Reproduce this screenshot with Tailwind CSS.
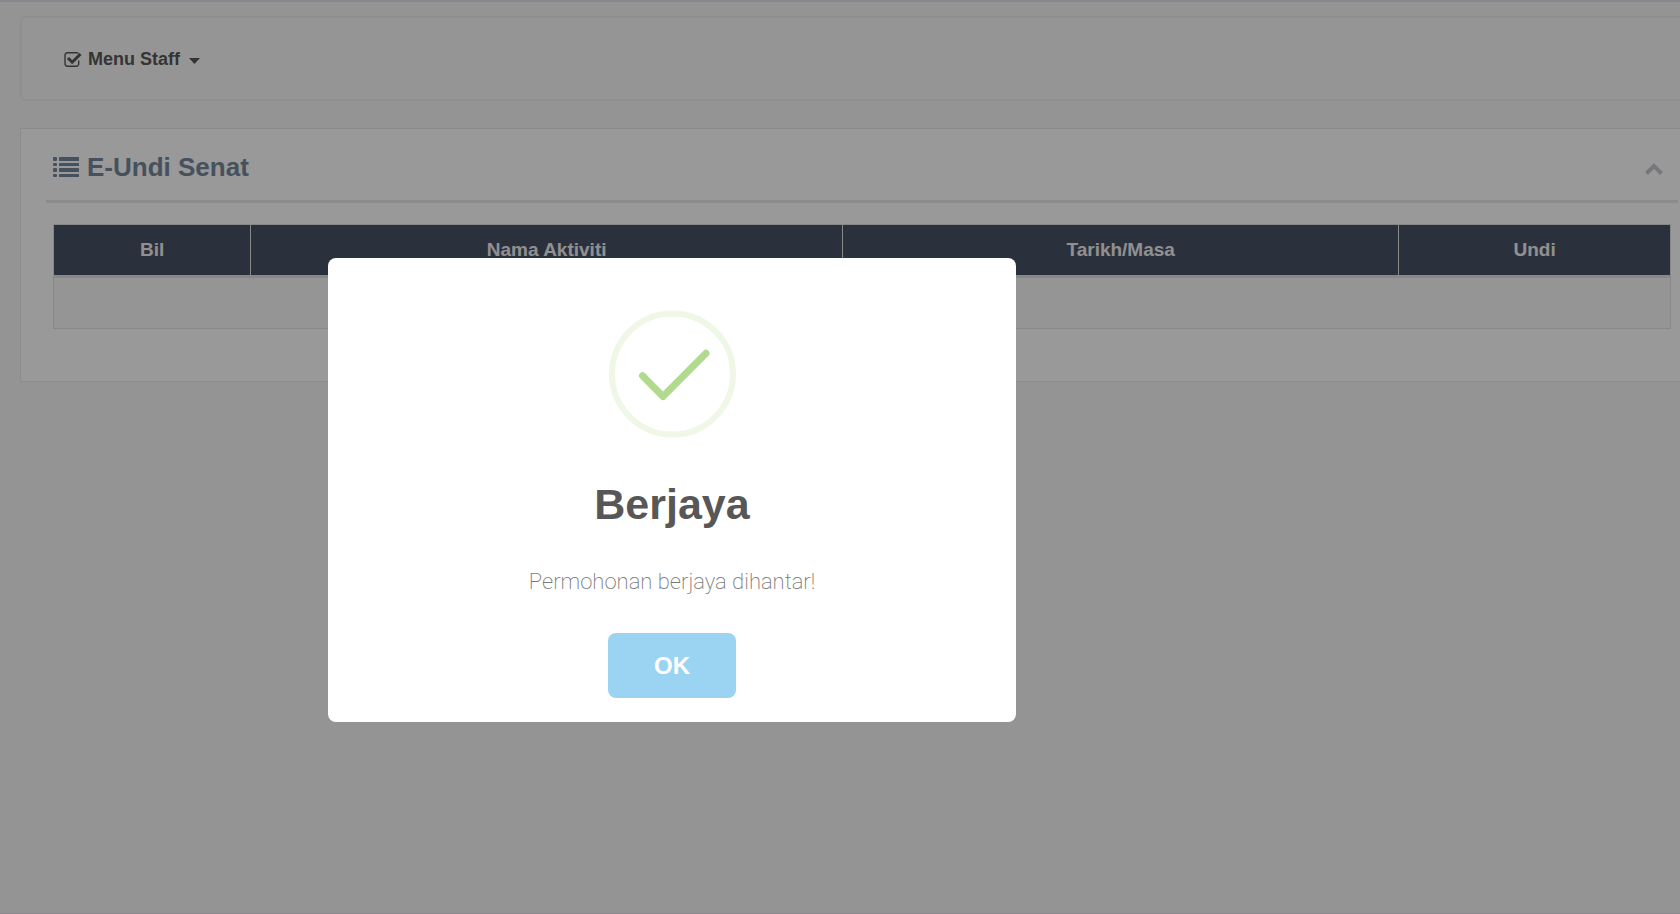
<!DOCTYPE html>
<html lang="ms">
<head>
  <meta charset="UTF-8" />
  <meta name="viewport" content="width=device-width, initial-scale=1.0" />
  <title>E-Undi Senat</title>
  <script src="https://cdn.jsdelivr.net/npm/@tailwindcss/browser@4"></script>
</head>
<body class="bg-[#f7f7f7] font-['Liberation_Sans',Arial,sans-serif] text-[#73879c]">
  <div class="min-h-screen border-t-2 border-b border-t-[#e3e3ee] border-b-[#e9e5e9] pl-5 pt-[14px]">

    <!-- MENU -->
    <nav class="flex h-[85px] items-center rounded-l-md border-y-2 border-l-2 border-[#efefef] bg-[#f9f9f9] pl-[42px] pt-[2px]">
      <button type="button" class="flex items-center text-[18px] font-bold text-[#575757]">
        <svg class="mr-[6px] h-4 w-[18px]" viewBox="0 0 18 16" fill="none">
          <path d="M14 1.1A2.400 2.400 0 0 0 12.600 .7H3.400A2.400 2.400 0 0 0 1 3.100v8.700a2.400 2.400 0 0 0 2.400 2.400h8.900a2.400 2.400 0 0 0 2.400-2.400V9" stroke="#575757" stroke-width="1.4" stroke-linecap="round" />
          <path d="M4 6l4.200 4.200L16.500 2" stroke="#575757" stroke-width="3" />
        </svg>
        Menu Staff
        <svg class="ml-[9px] mt-[2px] h-[6px] w-[11px]" viewBox="0 0 11 6"><path d="M0 0h11L5.500 6z" fill="#575757" /></svg>
      </button>
    </nav>

    <!-- PANEL -->
    <main class="mt-[27px] border-y border-l border-[#e6e9ed] bg-white pb-[52px] pl-[25px] pr-[2px]">
      <div class="flex h-[74px] items-center justify-between border-b-3 border-[#e9e9ea] pl-[7px] pr-[11px] pt-1">
        <h2 class="flex items-center text-[26px] font-bold leading-8">
          <svg class="mr-2 h-5 w-[26px]" viewBox="0 0 26 20" fill="#73879c">
            <rect x="0" y="0" width="4" height="4" rx="1" /><rect x="6" y="0" width="20" height="4" rx=".5" />
            <rect x="0" y="6" width="4" height="3" rx="1" /><rect x="6" y="6" width="20" height="3" rx=".5" />
            <rect x="0" y="11" width="4" height="4" rx="1" /><rect x="6" y="11" width="20" height="4" rx=".5" />
            <rect x="0" y="17" width="4" height="3" rx="1" /><rect x="6" y="17" width="20" height="3" rx=".5" />
          </svg>
          E-Undi Senat
        </h2>
        <button type="button" aria-label="Tutup panel" class="px-1 pt-2 pb-1">
          <svg class="h-3 w-[18px]" viewBox="0 0 18 12" fill="none"><path d="M1.500 10.500L9 3l7.500 7.500" stroke="#c5c7cb" stroke-width="4" /></svg>
        </button>
      </div>

      <div class="px-[7px] pt-[21px]">
        <table class="w-full table-fixed border-collapse border border-[#e3e3e3]">
          <thead>
            <tr class="h-[52px] bg-[#485265] text-[19px] text-[#f0f0f1]">
              <th class="w-[12.2%] border-r border-b-3 border-[#e3e3e3]">Bil</th>
              <th class="w-[36.6%] border-r border-b-3 border-[#e3e3e3]">Nama Aktiviti</th>
              <th class="w-[34.4%] border-r border-b-3 border-[#e3e3e3]">Tarikh/Masa</th>
              <th class="border-b-3 border-[#e3e3e3]">Undi</th>
            </tr>
          </thead>
          <tbody>
            <tr class="h-[52px] bg-[#f9f9f9]"><td colspan="4"></td></tr>
          </tbody>
        </table>
      </div>
    </main>
  </div>

  <!-- ALERT -->
  <div class="fixed inset-0 flex items-start bg-black/40 pt-[258px] pr-[20%]">
    <div role="dialog" aria-labelledby="alertTitle" class="mx-auto flex w-[688px] flex-col items-center rounded-lg bg-white pt-[52px] pb-6">
      <svg class="size-32" viewBox="0 0 128 128" fill="none">
        <circle cx="64.500" cy="64" r="60.500" stroke="#eff7e7" stroke-width="6" />
        <path d="M34.500 65.700L55 86.500L98 43.300" stroke="#b1da8f" stroke-width="7" stroke-linecap="round" stroke-linejoin="round" />
      </svg>
      <h2 id="alertTitle" class="mt-10 text-[43px] font-bold leading-[52px] text-[#575757]">Berjaya</h2>
      <p class="mt-9 font-[Roboto,sans-serif] text-[22px] font-extralight leading-8 text-[#797979]">Permohonan berjaya dihantar!</p>
      <button type="button" class="mt-[35px] h-[65px] w-32 rounded-lg bg-[#9bd4f2] text-[24px] font-bold text-white">OK</button>
    </div>
  </div>
</body>
</html>
